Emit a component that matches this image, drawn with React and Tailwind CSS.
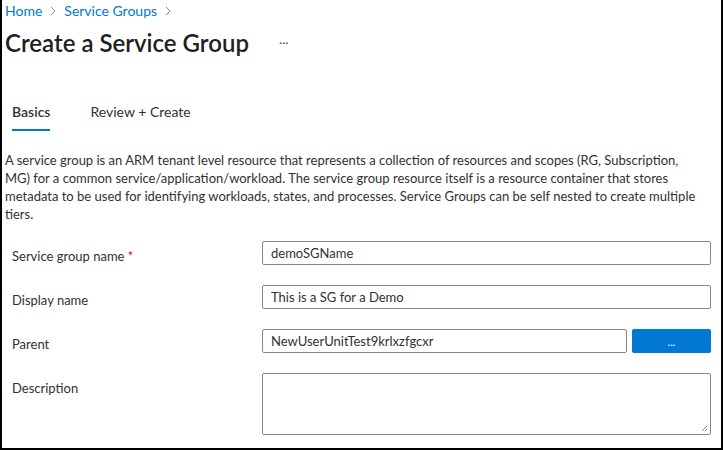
const font = { fontFamily: '"Segoe UI", Lato, "Noto Sans", sans-serif' };

function Chevron() {
  return (
    <svg width="6" height="10" viewBox="0 0 6 10" className="mx-[8px]">
      <path d="M1 1l4 4-4 4" fill="none" stroke="#8a8886" strokeWidth="1" />
    </svg>
  );
}

function Field({ label, required, children }) {
  return (
    <div className="flex items-start">
      <div className="w-[260px] shrink-0 pl-[10px] pt-[6px] text-[13px] leading-[18px] text-[#323130]">
        {label}
        {required ? <span className="text-[#a4262c]"> *</span> : null}
      </div>
      <div className="flex-1">{children}</div>
    </div>
  );
}

function TextBox({ value }) {
  return (
    <div className="flex h-[24px] items-center rounded-[2px] border border-[#8a8886] px-[8px] text-[13px] leading-[18px] text-[#323130]">
      {value}
    </div>
  );
}

export default function App() {
  return (
    <div
      style={font}
      className="h-[450px] w-[723px] overflow-hidden border-x-2 border-b-2 border-black bg-white text-[#323130]"
    >
      <nav className="flex h-[21px] items-center pl-[3px] text-[14px] text-[#0078d4]">
        <span>Home</span>
        <Chevron />
        <span>Service Groups</span>
        <Chevron />
      </nav>

      <div className="mt-[6px] flex items-center pl-[3px]">
        <h1 className="text-[24px] font-semibold leading-[32px] text-[#201f1e]">Create a Service Group</h1>
        <span className="ml-[30px] text-[12px] text-[#605e5c]">···</span>
      </div>

      <div className="mt-[43px] flex pl-[10px] text-[14px]">
        <div className="flex flex-col">
          <span className="font-semibold leading-[20px] text-[#323130]">Basics</span>
          <span className="mt-[7px] h-[2px] bg-[#0078d4]" />
        </div>
        <span className="ml-[40px] leading-[20px] text-[#323130]">Review + Create</span>
      </div>

      <p className="mt-[20px] pl-[3px] pr-[4px] text-[13px] leading-[18px] whitespace-nowrap">
        A service group is an ARM tenant level resource that represents a collection of resources and scopes (RG, Subscription,
        <br />
        MG) for a common service/application/workload. The service group resource itself is a resource container that stores
        <br />
        metadata to be used for identifying workloads, states, and processes. Service Groups can be self nested to create multiple
        <br />
        tiers.
      </p>

      <div className="mt-[18px] flex flex-col gap-[20px] pr-[10px]">
        <Field label="Service group name" required>
          <TextBox value="demoSGName" />
        </Field>
        <Field label="Display name">
          <TextBox value="This is a SG for a Demo" />
        </Field>
        <Field label="Parent">
          <div className="flex gap-[5px]">
            <div className="flex-1">
              <TextBox value="NewUserUnitTest9krlxzfgcxr" />
            </div>
            <button className="flex h-[24px] w-[79px] items-center justify-center rounded-[2px] bg-[#0078d4] text-[11px] leading-none text-white">
              ...
            </button>
          </div>
        </Field>
        <Field label="Description">
          <div className="relative h-[62px] rounded-[2px] border border-[#8a8886]">
            <svg width="7" height="7" viewBox="0 0 7 7" className="absolute bottom-[2px] right-[2px]">
              <path d="M6 1L1 6M6 4L4 6" stroke="#8a8886" strokeWidth="1" />
            </svg>
          </div>
        </Field>
      </div>
    </div>
  );
}
